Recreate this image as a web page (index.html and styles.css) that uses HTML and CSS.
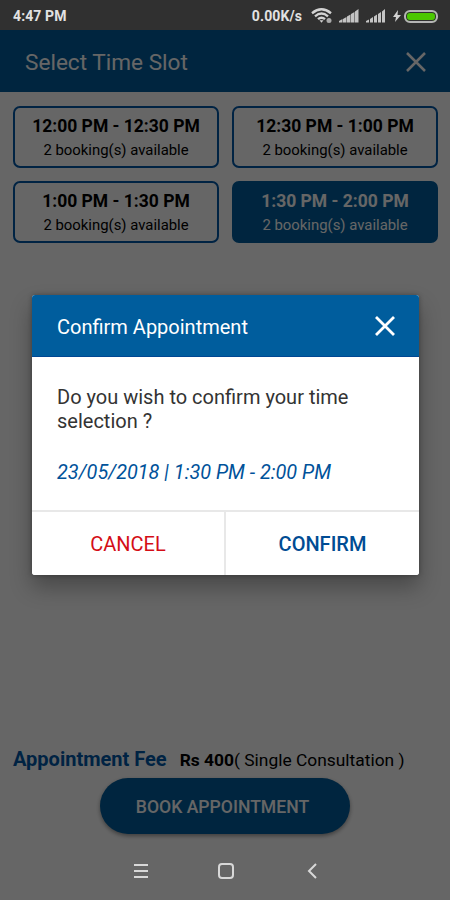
FILE: index.html
```html
<!DOCTYPE html>
<html lang="en">
<head>
    <meta charset="UTF-8">
    <meta name="viewport" content="width=device-width, initial-scale=1.0">
    <title>Select Time Slot</title>
    <link rel="stylesheet" href="styles.css">
</head>
<body>
    <div class="screen">
        <div class="status-bar">
            <span class="clock">4:47 PM</span>
            <span class="speed">0.00K/s</span>
            <svg class="wifi" width="22" height="16" viewBox="0 0 22 16" fill="none" stroke="#d2d2d2" stroke-width="2.400">
                <path d="M1 5.2Q10.500 -2.500 20 5.200M4 8.300Q10.500 2.900 17 8.300M7 11.200Q10.500 8.200 14 11.200"/>
                <path d="M8.500 12.300h4l-2 2.500z" fill="#d2d2d2" stroke="none"/>
                <circle cx="18" cy="12.500" r="2.500" fill="#aaa" stroke="none"/>
            </svg>
            <svg class="signal" width="20" height="14" viewBox="0 0 20 14" fill="#c4c4c4">
                <path d="M0 13.500v-1.500l3.500-2v3.500zM4 13.500V10l3.500-2v5.500zM8 13.500V7.500l3.500-2v8zM12 13.500V5l3.500-2v10.500zM16 13.500V2.500L19.500 0v13.500z"/>
            </svg>
            <svg class="signal signal-two" width="20" height="14" viewBox="0 0 20 14" fill="#c4c4c4">
                <path d="M0 13.500v-1.500l3-1.500v3zM4 13.500V10l3-2v5.500zM8 13.500V7.500l3-2v8zM12 13.500V5l3-2v10.500zM16 13.500V2.500L19 0v13.500z"/>
            </svg>
            <svg class="bolt" width="8" height="12" viewBox="0 0 8 12" fill="#d2d2d2">
                <path d="M5 0L0 7h3l-1 5 6-7H4.500z"/>
            </svg>
            <span class="battery"></span>
        </div>

        <div class="page-header">
            <h1>Select Time Slot</h1>
            <svg width="20" height="20" viewBox="0 0 20 20" stroke="#fff" stroke-width="2.500">
                <path d="M1 1l18 18M19 1L1 19"/>
            </svg>
        </div>

        <div class="slots">
            <div class="slot">
                <strong>12:00 PM - 12:30 PM</strong>
                <span>2 booking(s) available</span>
            </div>
            <div class="slot">
                <strong>12:30 PM - 1:00 PM</strong>
                <span>2 booking(s) available</span>
            </div>
            <div class="slot">
                <strong>1:00 PM - 1:30 PM</strong>
                <span>2 booking(s) available</span>
            </div>
            <div class="slot selected">
                <strong>1:30 PM - 2:00 PM</strong>
                <span>2 booking(s) available</span>
            </div>
        </div>

        <div class="fee">
            <span class="fee-label">Appointment Fee</span>
            <span class="fee-value"><b>Rs 400</b>( Single Consultation )</span>
        </div>
        <button class="book" type="button">BOOK APPOINTMENT</button>

        <div class="nav-bar">
            <svg width="16" height="16" viewBox="0 0 16 16" stroke="#d8d8d8" stroke-width="2">
                <path d="M1 2h14M1 8h14M1 14h14"/>
            </svg>
            <svg width="18" height="18" viewBox="0 0 18 18" fill="none" stroke="#d8d8d8" stroke-width="2">
                <rect x="2" y="2" width="14" height="14" rx="3"/>
            </svg>
            <svg width="10" height="16" viewBox="0 0 10 16" fill="none" stroke="#d8d8d8" stroke-width="2">
                <path d="M9 1L2 8l7 7"/>
            </svg>
        </div>
    </div>

    <div class="overlay">
        <div class="dialog">
            <div class="dialog-header">
                <h2>Confirm Appointment</h2>
                <svg width="20" height="20" viewBox="0 0 20 20" stroke="#fff" stroke-width="2.800">
                    <path d="M1 1l18 18M19 1L1 19"/>
                </svg>
            </div>
            <div class="dialog-body">
                <p class="question">Do you wish to confirm your time<br>selection ?</p>
                <p class="chosen">23/05/2018 | 1:30 PM - 2:00 PM</p>
            </div>
            <div class="dialog-actions">
                <button class="cancel" type="button">CANCEL</button>
                <button class="confirm" type="button">CONFIRM</button>
            </div>
        </div>
    </div>
</body>
</html>
```
FILE: styles.css
```css
* {
    box-sizing: border-box;
}
body {
    margin: 0;
    background-color: #fff;
    font-family: Roboto, Arial, sans-serif;
    color: #000;
}
h1, h2, p {
    margin: 0;
    font-weight: 400;
}
svg {
    display: block;
    flex: none;
}
button {
    border: none;
    padding: 0;
    font-family: inherit;
}
.screen {
    display: flex;
    flex-direction: column;
    width: 450px;
    height: 900px;
    overflow: hidden;
    white-space: nowrap;
}

/* the system bars stay above the dimmed page */
.status-bar,
.nav-bar {
    position: relative;
    z-index: 2;
}
.status-bar {
    display: flex;
    align-items: center;
    height: 30px;
    padding: 2px 12px 0 13px;
    background-color: #303030;
    color: #e2e2e2;
    font-size: 14px;
}
.clock {
    font-weight: 700;
    letter-spacing: 0.1px;
}
.speed {
    margin-left: auto;
    margin-right: 9px;
    font-weight: 700;
    letter-spacing: 0.1px;
}
.wifi {
    margin-right: 6px;
}
.signal-two {
    margin-left: 7px;
}
.bolt {
    margin-left: 7px;
    margin-right: 3px;
}
.battery {
    width: 34px;
    height: 13px;
    border: 2px solid #b5b5b5;
    border-radius: 6px;
    background-color: #4bc800;
    box-shadow: inset 0 0 0 1px #303030;
}

.page-header {
    display: flex;
    align-items: center;
    justify-content: space-between;
    height: 62px;
    padding: 1px 24px 0 25px;
    background-color: #005d9d;
    color: #fff;
}
.page-header h1 {
    padding-top: 2px;
    font-size: 22.6px;
}
.slots {
    display: grid;
    grid-template-columns: 206px 206px;
    grid-auto-rows: 62px;
    gap: 13px;
    padding: 14px 12px 0 13px;
}
.slot {
    display: flex;
    flex-direction: column;
    align-items: center;
    padding-top: 7px;
    border: 2px solid #0057a8;
    border-radius: 7px;
}
.slot strong {
    font-size: 17.5px;
    line-height: 22px;
    font-weight: 700;
}
.slot span {
    margin-top: 3px;
    font-size: 14.9px;
    line-height: 20px;
}
.slot.selected {
    background-color: #005d9d;
    border-color: #005d9d;
    color: #fff;
}

.fee {
    display: flex;
    align-items: baseline;
    gap: 13px;
    margin-top: auto;
    padding-left: 13px;
    line-height: 24px;
}
.fee-label {
    color: #0057a8;
    font-size: 20px;
    font-weight: 700;
}
.fee-value {
    font-size: 17.4px;
}
.book {
    flex: none;
    align-self: center;
    width: 250px;
    height: 56px;
    margin-top: 6px;
    padding: 2px 5px 0 0;
    border-radius: 28px;
    background-color: #005d9d;
    box-shadow: 0 2px 4px rgba(0, 0, 0, 0.4);
    color: #fff;
    font-size: 17.6px;
    font-weight: 500;
}
.nav-bar {
    display: flex;
    align-items: center;
    height: 66px;
    padding: 7px 0 0 133px;
    gap: 68px;
}
.nav-bar svg:last-child {
    margin-left: 4px;
}

.overlay {
    position: absolute;
    z-index: 1;
    top: 0;
    left: 0;
    width: 450px;
    height: 900px;
    padding: 295px 31px 0 32px;
    background-color: rgba(0, 0, 0, 0.6);
    white-space: nowrap;
}
.dialog {
    height: 280px;
    border-radius: 3px;
    background-color: #fff;
    box-shadow: 0 12px 22px rgba(0, 0, 0, 0.3), 0 0 5px rgba(0, 0, 0, 0.3);
    overflow: hidden;
}
.dialog-header {
    display: flex;
    align-items: center;
    justify-content: space-between;
    height: 62px;
    padding: 1px 24px 0 25px;
    background-color: #005d9d;
    border-bottom: 1px solid #004793;
    color: #fff;
}
.dialog-header h2 {
    padding-top: 2px;
    font-size: 20px;
}
.dialog-body {
    height: 153px;
    padding: 28px 25px 0;
    font-size: 20px;
    line-height: 24px;
}
.question {
    color: #333;
}
.chosen {
    margin-top: 28px;
    color: #00529a;
    font-size: 19.85px;
    font-style: italic;
}
.dialog-actions {
    display: grid;
    grid-template-columns: 194px 1fr;
    height: 65px;
    border-top: 2px solid #e8e8e8;
}
.dialog-actions button {
    background-color: #fff;
    font-size: 20px;
}
.dialog-actions .cancel {
    border-right: 2px solid #e8e8e8;
    color: #d40d16;
}
.dialog-actions .confirm {
    color: #004c93;
    font-weight: 500;
}
```
